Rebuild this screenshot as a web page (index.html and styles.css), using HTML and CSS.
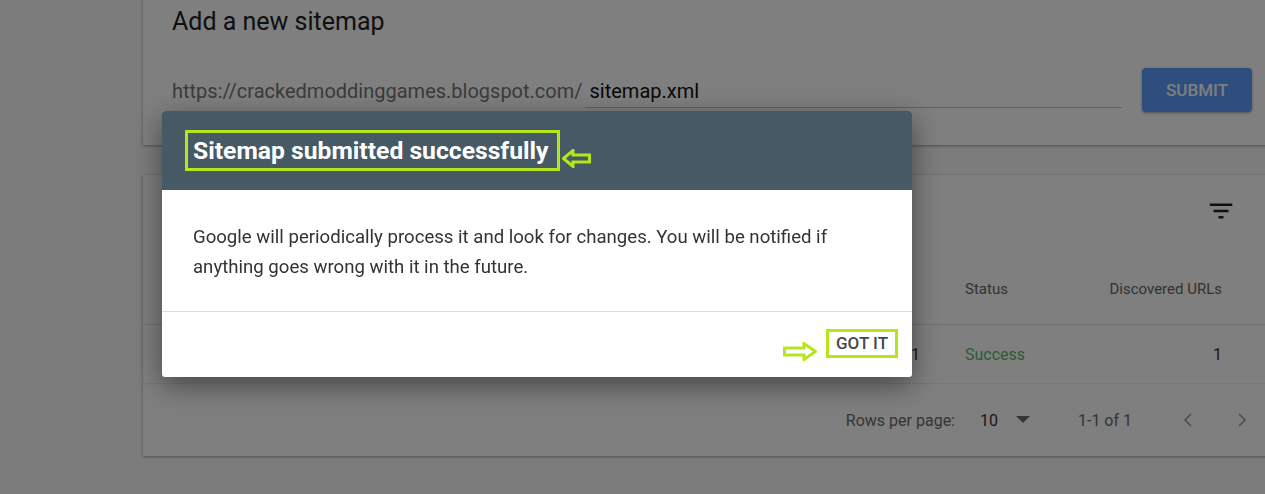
FILE: index.html
```html
<!DOCTYPE html>
<html lang="en">
<head>
    <meta charset="UTF-8">
    <meta name="viewport" content="width=device-width, initial-scale=1.0">
    <title>Sitemaps</title>
    <link rel="stylesheet" href="styles.css">
</head>
<body>
    <div class="page">
        <section class="card add-card">
            <h2 class="card-title">Add a new sitemap</h2>
            <div class="add-row">
                <div class="url-field">
                    <span class="url-prefix">https://crackedmoddinggames.blogspot.com/</span>
                    <div class="url-input">sitemap.xml</div>
                </div>
                <button class="submit-btn">SUBMIT</button>
            </div>
        </section>

        <section class="card table-card">
            <div class="table-toolbar">
                <span class="table-title">Submitted sitemaps</span>
                <svg class="filter-icon" width="30" height="30" viewBox="0 0 24 24"><path d="M10 18h4v-2h-4v2zM3 6v2h18V6H3zm3 7h12v-2H6v2z"/></svg>
            </div>
            <div class="table-row table-head">
                <span>Sitemap</span>
                <span>Type</span>
                <span>Submitted</span>
                <span>Last read</span>
                <span>Status</span>
                <span class="num">Discovered URLs</span>
            </div>
            <div class="table-row table-body">
                <span>/sitemap.xml</span>
                <span>Sitemap</span>
                <span>Jul 1, 2021</span>
                <span class="num">1</span>
                <span class="status-ok">Success</span>
                <span class="num">1</span>
            </div>
            <div class="pager">
                <span class="pager-label">Rows per page:</span>
                <span class="pager-size">10</span>
                <svg class="pager-drop" width="14" height="8" viewBox="0 0 14 8"><path d="M0 0h14L7 7z"/></svg>
                <span class="pager-range">1-1 of 1</span>
                <svg class="pager-arrow prev" width="24" height="24" viewBox="0 0 24 24"><path d="M15 6l-6 6 6 6"/></svg>
                <svg class="pager-arrow next" width="24" height="24" viewBox="0 0 24 24"><path d="M9 6l6 6-6 6"/></svg>
            </div>
        </section>
    </div>

    <div class="overlay"></div>

    <div class="dialog">
        <div class="dialog-header">
            <h1 class="dialog-title">Sitemap submitted successfully</h1>
            <svg class="mark-arrow left" width="29" height="19" viewBox="0 0 29 19"><path d="M1.5 9.5L11 1.5v4.5h16.5v7H11v4.5z"/></svg>
        </div>
        <div class="dialog-body">
            <p>Google will periodically process it and look for changes. You will be notified if anything goes wrong with it in the future.</p>
        </div>
        <div class="dialog-footer">
            <svg class="mark-arrow right" width="34" height="19" viewBox="0 0 34 19"><path d="M32.5 9.5L21 1.5v4.5H1.5v7H21v4.5z"/></svg>
            <button class="got-btn">GOT IT</button>
        </div>
    </div>
</body>
</html>
```

FILE: styles.css
```css
body {
    margin: 0;
    padding: 0;
    font-family: Roboto, "Liberation Sans", Arial, sans-serif;
    background-color: #f9f9f9;
    color: #212121;
    overflow: hidden;
    height: 494px;
}

.page {
    margin-left: 143px;
    width: 1125px;
}

.card {
    background-color: #fff;
    box-shadow: 0 1px 3px rgba(0, 0, 0, 0.35);
}

/* add sitemap card */
.add-card {
    margin-top: -10px;
    padding: 10px 16px 33px 29px;
}

.card-title {
    margin: 0;
    font-size: 25px;
    font-weight: 400;
    line-height: 44px;
    color: #212121;
}

.add-row {
    display: flex;
    align-items: flex-start;
    margin-top: 24px;
}

.url-field {
    flex: 1;
    display: flex;
    height: 40px;
    font-size: 20px;
}

.url-prefix {
    color: #777;
    padding-top: 6px;
    line-height: 34px;
}

.url-input {
    flex: 1;
    margin-left: 2px;
    padding: 6px 0 0 5px;
    line-height: 34px;
    border-bottom: 1px solid #c4c4c4;
    color: #111;
}

.submit-btn {
    margin-left: 20px;
    width: 110px;
    height: 44px;
    border: none;
    border-radius: 4px;
    background-color: #5a9cff;
    color: #fff;
    font-family: inherit;
    font-size: 17px;
    font-weight: 500;
    box-shadow: 0 1px 3px rgba(0, 0, 0, 0.35);
}

/* sitemaps table */
.table-card {
    margin-top: 30px;
}

.table-toolbar {
    display: flex;
    align-items: center;
    justify-content: space-between;
    height: 70px;
    padding: 5px 32px 0 29px;
}

.table-title {
    font-size: 22px;
}

.filter-icon {
    fill: #222;
    margin-top: -8px;
}

.table-row {
    display: grid;
    grid-template-columns: 1fr 120px 120px 165px 120px 137px;
    align-items: center;
    padding: 0 46px 0 29px;
}

.table-row .num {
    text-align: right;
}

.table-row span:nth-child(4) {
    padding-right: 45px;
}

.table-head {
    height: 75px;
    padding-top: 4px;
    box-sizing: border-box;
    font-size: 15px;
    color: #666;
    border-bottom: 1px solid #dcdcdc;
}

.table-body {
    height: 58px;
    font-size: 16px;
    color: #333;
}

.status-ok {
    color: #52b871;
}

.pager {
    display: flex;
    align-items: center;
    justify-content: flex-end;
    height: 72px;
    padding-right: 14px;
    font-size: 16px;
    color: #6a6a6a;
    border-top: 1px solid #eee;
}

.pager-size {
    margin-left: 25px;
    color: #333;
    font-size: 16px;
}

.pager-drop {
    margin-left: 18px;
    fill: #6a6a6a;
}

.pager-range {
    margin-left: 48px;
}

.pager-arrow {
    fill: none;
    stroke: #9a9a9a;
    stroke-width: 1.6;
}

.pager-arrow.prev {
    margin-left: 44px;
}

.pager-arrow.next {
    margin-left: 30px;
}

/* dialog */
.overlay {
    position: fixed;
    top: 0;
    left: 0;
    right: 0;
    bottom: 0;
    background-color: rgba(0, 0, 0, 0.5);
}

.dialog {
    position: absolute;
    left: 162px;
    top: 111px;
    width: 750px;
    background-color: #fff;
    border-radius: 3px;
    box-shadow: 0 8px 28px rgba(0, 0, 0, 0.45);
    overflow: hidden;
}

.dialog-header {
    display: flex;
    align-items: center;
    height: 79px;
    padding-left: 23px;
    background-color: #465a66;
}

.dialog-title {
    margin: 0;
    padding: 0 8px 0 5px;
    border: 3px solid #b5e61d;
    font-size: 24.7px;
    font-weight: 700;
    line-height: 35px;
    color: #fff;
}

.mark-arrow {
    fill: none;
    stroke: #b5e61d;
    stroke-width: 3;
    stroke-linejoin: miter;
}

.mark-arrow.left {
    margin: 16px 0 0 2px;
}

.dialog-body {
    padding: 32px 60px 29px 31px;
    border-bottom: 1px solid #ddd;
}

.dialog-body p {
    margin: 0;
    font-size: 18.6px;
    line-height: 30px;
    color: #333;
}

.dialog-footer {
    display: flex;
    align-items: center;
    justify-content: flex-end;
    height: 65px;
    padding-right: 14px;
}

.mark-arrow.right {
    margin: 14px 9px 0 0;
}

.got-btn {
    height: 29px;
    padding: 0 7px;
    border: 3px solid #b5e61d;
    background: #fff;
    font-family: inherit;
    font-size: 17px;
    font-weight: 500;
    color: #424a50;
    margin-top: -3px;
}
```
